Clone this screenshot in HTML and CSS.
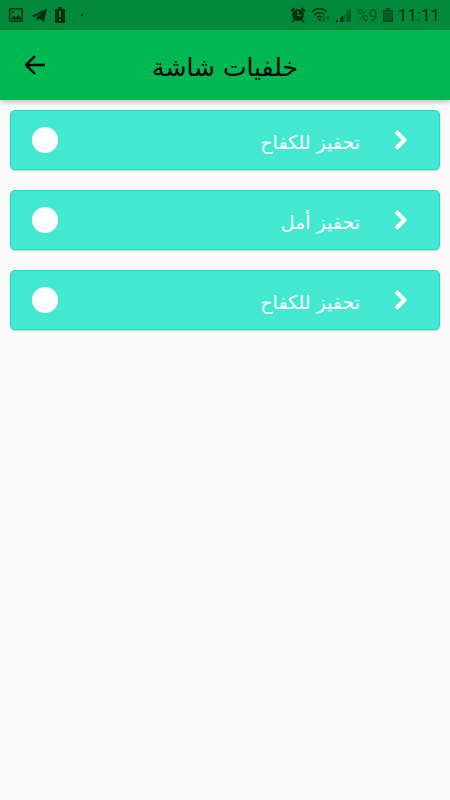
FILE: index.html
```
<!DOCTYPE html>
<html lang="ar" dir="rtl">
<head>
<meta charset="utf-8">
<meta name="viewport" content="width=device-width, initial-scale=1">
<title>خلفيات شاشة</title>
<link rel="stylesheet" href="styles.css">
</head>
<body>
<div class="status" dir="ltr">
  <div class="status-group notices">
    <svg width="16" height="16" viewBox="0 0 16 16"><path fill="currentColor" fill-rule="evenodd" d="M2 1h12q1 0 1 1v12q0 1-1 1H2q-1 0-1-1V2q0-1 1-1zm.5 1.500v11h11v-11zM3 12.500l3-4 2 2.300 2.500-3.600 3 5.300zM4 4h2v2H4z"/></svg>
    <svg width="16" height="16" viewBox="0 0 16 16"><path fill="currentColor" d="M0 9 16 1.500 13 15l-4.500-3.500L6 14l-.5-3.500L12 5 4 10z"/></svg>
    <svg width="12" height="16" viewBox="0 0 12 16"><path fill="currentColor" fill-rule="evenodd" d="M4 0h4v2h3v14H1V2h3zM5 4v6h2V4zm0 8v2h2v-2z"/></svg>
    <span class="dot"></span>
  </div>
  <div class="status-group">
    <svg width="16" height="16" viewBox="0 0 16 16"><circle cx="8" cy="8" r="6" fill="currentColor"/><path d="M1 4.500 4.500 1M11.500 1 15 4.500M4 13l-2 2.500M12 13l2 2.500" stroke="currentColor" stroke-width="2" fill="none"/><path d="M8 4v4.500h3.500" fill="none" stroke="#00893a" stroke-width="1.500"/></svg>
    <svg width="20" height="16" viewBox="0 0 20 16"><g fill="none" stroke="currentColor" stroke-width="1.500"><path d="M1 5q7.500-7 15 0M3.500 8q5-5 10 0M6 10.500q2.500-2.500 5 0"/></g><circle cx="8.500" cy="12.500" r="1.300" fill="currentColor"/><path class="faint" d="m11 12 2 3 2-3zm4-1 2-3 2 3zM12.500 9h1v3h-1zM16.500 11h1v3h-1z"/></svg>
    <svg width="16" height="16" viewBox="0 0 16 16"><path fill="currentColor" d="M0 13h2v2H0zM4 11l3-2v6H4z"/><path class="faint" d="M7 9l2-2v8H7zM10 5l5-4v14h-5z"/></svg>
    <span class="percent">%9</span>
    <svg class="battery" width="10" height="16" viewBox="0 0 10 16"><path class="faint" d="M3 1h4v2h3v12H0V3h3z"/><path d="M3.500 1.500h3v2h3v11h-9v-11h3zM1 13.500h8" fill="none" stroke="currentColor"/></svg>
    <time class="clock">11:11</time>
  </div>
</div>
<header class="bar">
  <h1 class="title">خلفيات شاشة</h1>
  <button class="back" type="button" aria-label="رجوع">
    <svg width="20" height="20" viewBox="0 0 20 20"><path d="M20 10H2M10 1l-9 9 9 9" fill="none" stroke="currentColor" stroke-width="2.400"/></svg>
  </button>
</header>
<main class="list">
  <button class="item" type="button">
    <svg class="chevron" width="14" height="20" viewBox="0 0 14 20"><path d="m2 1.500 8.500 8.500L2 18.500"/></svg>
    <span class="label">تحفيز للكفاح</span>
    <span class="circle"></span>
  </button>
  <button class="item" type="button">
    <svg class="chevron" width="14" height="20" viewBox="0 0 14 20"><path d="m2 1.500 8.500 8.500L2 18.500"/></svg>
    <span class="label">تحفيز أمل</span>
    <span class="circle"></span>
  </button>
  <button class="item" type="button">
    <svg class="chevron" width="14" height="20" viewBox="0 0 14 20"><path d="m2 1.500 8.500 8.500L2 18.500"/></svg>
    <span class="label">تحفيز للكفاح</span>
    <span class="circle"></span>
  </button>
</main>
</body>
</html>
```
FILE: styles.css
```
* {
  box-sizing: border-box;
}

body {
  margin: 0;
  min-height: 100vh;
  background: #fafafa;
  font-family: "DejaVu Sans", sans-serif;
}

button {
  border: 0;
  font: inherit;
  cursor: pointer;
}

svg {
  display: block;
  flex: none;
}

.status {
  display: flex;
  align-items: center;
  justify-content: space-between;
  height: 30px;
  padding: 0 10px 0 8px;
  background: #00893a;
  color: #003010;
  font-family: Roboto, sans-serif;
}

.status-group {
  display: flex;
  align-items: center;
  gap: 5px;
}

.notices {
  gap: 7px;
}

.dot {
  width: 2px;
  height: 2px;
  margin-left: 8px;
  background: currentColor;
}

.faint {
  fill: #006026;
}

.percent {
  color: #00591f;
  font-size: 16px;
}

.battery {
  color: #00491c;
}

.clock {
  font-size: 17px;
}

.bar {
  display: grid;
  grid-template-columns: 70px 1fr 70px;
  align-items: center;
  height: 70px;
  background: #00b851;
  color: #000;
  box-shadow: 0 2px 5px rgba(0, 0, 0, 0.25);
}

.title {
  grid-column: 2;
  margin: 0;
  padding-top: 6px;
  font-size: 25px;
  font-weight: 400;
  line-height: 36px;
  text-align: center;
}

.back {
  display: grid;
  place-items: center;
  height: 70px;
  padding: 0;
  background: none;
  color: #000;
}

.list {
  display: grid;
  gap: 20px;
  padding: 10px;
}

.item {
  display: flex;
  align-items: center;
  height: 60px;
  padding: 0 31px 0 21px;
  border: 1px solid #18dfbd;
  border-radius: 5px;
  background: #42e9d0;
  color: #fff;
  box-shadow: 0 1px 2px rgba(0, 0, 0, 0.2);
}

.chevron {
  fill: none;
  stroke: currentColor;
  stroke-width: 4;
}

.label {
  flex: 1;
  padding: 4px 34px 0;
  font-size: 19px;
  line-height: 28px;
  text-align: start;
}

.circle {
  width: 26px;
  height: 26px;
  border-radius: 50%;
  background: #fff;
}
```
